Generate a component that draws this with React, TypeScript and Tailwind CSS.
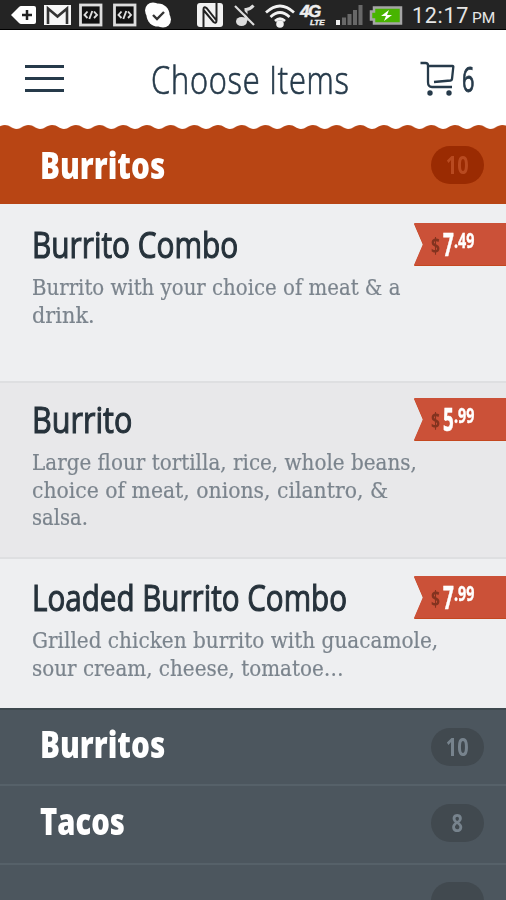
import React from 'react';
import clsx from 'clsx';

interface MenuItem {
  name: string;
  nameClass: string;
  lines: { text: string; className: string }[];
  dollars: string;
  cents: string;
  rowClass: string;
  tagClass: string;
}

const items: MenuItem[] = [
  {
    name: 'Burrito Combo',
    nameClass: 'scale-x-[0.806]',
    lines: [
      { text: 'Burrito with your choice of meat & a', className: 'scale-x-[0.918]' },
      { text: 'drink.', className: 'scale-x-[0.97]' },
    ],
    dollars: '7',
    cents: '.49',
    rowClass: 'h-[177px] bg-[#eeeff1] pt-[19px]',
    tagClass: 'mt-0',
  },
  {
    name: 'Burrito',
    nameClass: 'scale-x-[0.825]',
    lines: [
      { text: 'Large flour tortilla, rice, whole beans,', className: 'scale-x-[0.928]' },
      { text: 'choice of meat, onions, cilantro, &', className: 'scale-x-[0.948]' },
      { text: 'salsa.', className: 'scale-x-[0.91]' },
    ],
    dollars: '5',
    cents: '.99',
    rowClass: 'h-[176px] border-t-2 border-[#dedfe1] bg-[#e8e8ea] pt-[15px]',
    tagClass: 'mt-0',
  },
  {
    name: 'Loaded Burrito Combo',
    nameClass: 'scale-x-[0.8]',
    lines: [
      { text: 'Grilled chicken burrito with guacamole,', className: 'scale-x-[0.932]' },
      { text: 'sour cream, cheese, tomatoe…', className: 'scale-x-[0.927]' },
    ],
    dollars: '7',
    cents: '.99',
    rowClass: 'h-[151px] border-t-2 border-[#dedfe1] bg-[#eeeff1] pt-[17px]',
    tagClass: 'mt-0',
  },
];

const CodeIcon = () => (
  <svg width="24" height="24" viewBox="0 0 24 24" fill="none">
    <rect x="1.5" y="2" width="20.5" height="20" fill="#111" stroke="#ddd" strokeWidth="2.8" />
    <path d="M8.5 8.5 5.5 12l3 3M15 8.5l3 3.500-3 3M13.300 8l-3 8" stroke="#ddd" strokeWidth="1.9" />
  </svg>
);

const StatusBar = () => (
  <div className="flex h-[30px] shrink-0 items-center border-b border-black bg-[#242424] pt-[1px] text-[#eee]">
    <svg className="ml-[10px] shrink-0" width="27" height="20" viewBox="0 0 27 20">
      <path d="M1 10 9 2q1-1 2-1h13q2 0 2 2v14q0 2-2 2H11q-1 0-2-1Z" fill="#fff" />
      <path d="M17 5v10M12 10h10" stroke="#222" strokeWidth="2.5" />
    </svg>
    <svg className="ml-[7px] shrink-0" width="27" height="20" viewBox="0 0 27 20" fill="none">
      <rect width="27" height="20" fill="#f6f6f6" />
      <path d="M4 19V3.5l9.5 8 9.5-8V19" stroke="#333" strokeWidth="2.6" />
    </svg>
    <div className="ml-[8px] shrink-0"><CodeIcon /></div>
    <div className="ml-[10px] shrink-0"><CodeIcon /></div>
    <svg className="ml-[7px] shrink-0" width="28" height="26" viewBox="0 0 28 26">
      <circle cx="9" cy="8.5" r="8" fill="#fff" />
      <circle cx="19" cy="17.5" r="8" fill="#fff" />
      <circle cx="14" cy="13" r="11.5" fill="#fff" />
      <path d="m9 13 4 4 7-7" fill="none" stroke="#333" strokeWidth="2.4" />
    </svg>
    <svg className="ml-[24px] shrink-0" width="28" height="26" viewBox="0 0 28 26">
      <rect x="1" y="1" width="26" height="24" rx="3" fill="#f2f2f2" />
      <path d="M7.5 25V7.5q0-3.500 3-1.500l10 12.500M20.500 1v17.500q0 3.500-3 1.500l-10-12" fill="none" stroke="#222" strokeWidth="2" />
    </svg>
    <svg className="ml-[9px] shrink-0" width="25" height="26" viewBox="0 0 25 26" fill="none">
      <path d="M13 19V7.500q4 0 7.500-4" stroke="#ddd" strokeWidth="3" />
      <ellipse cx="8.5" cy="19.5" rx="5.5" ry="4.5" fill="#ddd" />
      <path d="m3 2 19 19" stroke="#222" strokeWidth="1.8" />
      <path d="m2 4 19 19" stroke="#ddd" strokeWidth="2.2" />
    </svg>
    <svg className="ml-[6px] shrink-0" width="32" height="25" viewBox="0 0 32 25" fill="none">
      <path d="M2 9.5q14-13 28 0M6.5 14q9.500-9 19 0M11 18q5-4.500 10 0" stroke="#f2f2f2" strokeWidth="2.7" />
      <circle cx="16" cy="21" r="3.8" fill="#f2f2f2" />
    </svg>
    <div className="ml-[4px] flex h-[24px] w-[32px] shrink-0 flex-col pt-[1px] font-['Liberation_Sans'] font-bold italic">
      <span className="h-[15px] text-[17px] leading-[15px] tracking-[-1.5px] [-webkit-text-stroke:0.5px]">4G</span>
      <span className="h-[8px] pl-[10px] text-[8px] leading-[8px] [-webkit-text-stroke:0.4px]">LTE</span>
    </div>
    <svg className="ml-[4px] shrink-0" width="28" height="22" viewBox="0 0 28 22" fill="#686868">
      <rect y="16" width="4" height="5" fill="#eee" />
      <rect x="6" y="13.5" width="4" height="7.5" />
      <rect x="11.5" y="10" width="4" height="11" />
      <rect x="17" y="6" width="4" height="15" />
      <rect x="22.5" y="1" width="4" height="20" />
    </svg>
    <svg className="ml-[5px] shrink-0" width="34" height="19" viewBox="0 0 34 19">
      <path d="M5 1.5h27v16H5v-4H2v-8h3Z" fill="#48b400" stroke="#a5a5a5" strokeWidth="2.5" />
      <path d="m20 4-8 6h5l-2 5 8-6h-5Z" fill="#fff" />
    </svg>
    <div className="ml-[9px] flex items-baseline whitespace-nowrap pt-[3px] font-[Roboto] text-[#e6e6e6]">
      <span className="w-[56px] text-[21.5px] leading-[28px] tracking-[0.7px]">12:17</span>
      <span className="ml-[4px] text-[15.5px] leading-[28px]">PM</span>
    </div>
  </div>
);

const Header = () => (
  <header className="flex h-[95px] shrink-0 bg-white text-[#263a4a]">
    <div className="ml-[25px] mt-[35px] flex h-[27px] w-[39px] flex-col justify-between">
      <span className="h-[3px] bg-[#263a4a]" />
      <span className="h-[3px] bg-[#263a4a]" />
      <span className="h-[3px] bg-[#263a4a]" />
    </div>
    <h1 className="ml-[87px] mt-[24px] w-[198px] origin-left scale-x-[0.79] whitespace-nowrap text-[39px] font-light leading-[50px] tracking-[1px] [-webkit-text-stroke:0.7px]">
      Choose Items
    </h1>
    <svg className="ml-[71px] mt-[30px]" width="36" height="38" viewBox="0 0 36 38" fill="none" stroke="#263a4a" strokeWidth="2.3">
      <path d="M.5 3h5q2.500 0 2.500 2.500V22q0 5 4 5h20" />
      <path d="M8 6h24.500q1 0 .8 1L32 19q-.2 1.300-1.500 1.500L14 22" />
      <circle cx="10" cy="33" r="2.7" fill="#263a4a" stroke="none" />
      <circle cx="29" cy="33" r="2.7" fill="#263a4a" stroke="none" />
    </svg>
    <span className="ml-[6px] mt-[25px] w-[14px] origin-left scale-x-[0.62] text-[35px] leading-[48px] [-webkit-text-stroke:0.9px]">6</span>
  </header>
);

const Scallops = () => (
  <svg className="block h-[5px] w-full shrink-0 bg-white" width="506" height="5">
    <defs>
      <pattern id="scallop" x="-7.15" width="23.7" height="5" patternUnits="userSpaceOnUse">
        <path d="M0 4C4.500 4 6.500 0 11.850 0S19.200 4 23.700 4V5H0Z" fill="#b84514" />
      </pattern>
    </defs>
    <rect width="506" height="5" fill="url(#scallop)" />
  </svg>
);

const PriceTag = ({ dollars, cents, className }: { dollars: string; cents: string; className: string }) => (
  <div className={clsx('h-[43px] w-[92px] shrink-0 drop-shadow-[0_1px_0_#c4471f]', className)}>
    <div className="flex h-[42px] bg-[#cb5138] pl-[17px] text-white [clip-path:polygon(0_0,100%_0,100%_100%,0_100%,9px_50%)]">
      <span className="mt-[10px] w-[12px] origin-left scale-x-[0.75] text-[21px] font-bold leading-[24px] text-[#83331f]">$</span>
      <span className="mt-[5px] w-[11px] origin-left scale-x-[0.59] text-[32px] font-bold leading-[32px] [-webkit-text-stroke:0.6px]">{dollars}</span>
      <span className="mt-[6px] origin-left scale-x-[0.68] text-[21px] font-bold leading-[22px] [-webkit-text-stroke:0.4px]">{cents}</span>
    </div>
  </div>
);

const ItemRow: React.FC<{ item: MenuItem }> = ({ item }) => (
  <div className={clsx('flex shrink-0 overflow-hidden pl-[32px]', item.rowClass)}>
    <div className="w-[382px] shrink-0 pt-[1px]">
      <h2 className={clsx('w-max origin-left whitespace-nowrap text-[37px] leading-[40px] text-[#26323b] [-webkit-text-stroke:1.1px]', item.nameClass)}>
        {item.name}
      </h2>
      <div className="mt-[10px] font-['DejaVu_Serif',serif] text-[21.5px] leading-[27.7px] text-[#7b848d] [-webkit-text-stroke:0.2px]">
        {item.lines.map((line) => (
          <p key={line.text} className={clsx('w-max origin-left whitespace-nowrap', line.className)}>{line.text}</p>
        ))}
      </div>
    </div>
    <PriceTag dollars={item.dollars} cents={item.cents} className={item.tagClass} />
  </div>
);

const Category = ({ name, count, className, badgeClass, nameClass }: {
  name: string; count: string; className: string; badgeClass: string; nameClass: string;
}) => (
  <div className={clsx('flex shrink-0 justify-between pl-[40px] pr-[22px]', className)}>
    <h2 className={clsx('mt-[1px] w-max origin-left whitespace-nowrap text-[37px] font-extrabold leading-[50px] text-white', nameClass)}>{name}</h2>
    <div className={clsx('flex h-[38px] w-[53px] items-center justify-center rounded-full text-[25px] font-bold', badgeClass)}>
      <span className="scale-x-[0.8]">{count}</span>
    </div>
  </div>
);

export default function App() {
  return (
    <div className="flex h-[900px] w-[506px] flex-col overflow-hidden bg-[#4c565e] font-['Open_Sans','Noto_Sans',sans-serif]">
      <StatusBar />
      <Header />
      <Scallops />
      <Category
        name="Burritos"
        count="10"
        className="h-[74px] bg-[#b84514] pt-[9px]"
        nameClass="scale-x-[0.802]"
        badgeClass="mt-[7px] bg-[#9a2b02] text-[#b84a20]"
      />
      {items.map((item) => (
        <ItemRow key={item.name} item={item} />
      ))}
      <Category
        name="Burritos"
        count="10"
        className="h-[76px] border-t-2 border-t-[#3e494f] pt-[8px]"
        nameClass="scale-x-[0.802]"
        badgeClass="mt-[10px] bg-[#41494f] text-[#77838d]"
      />
      <Category
        name="Tacos"
        count="8"
        className="h-[79px] border-t-2 border-[#566169] pt-[9px]"
        nameClass="scale-x-[0.79]"
        badgeClass="mt-[9px] bg-[#41494f] text-[#77838d]"
      />
      <Category
        name=""
        count=""
        className="h-[78px] border-t-2 border-[#566169] pt-[8px]"
        nameClass=""
        badgeClass="mt-[9px] bg-[#41494f]"
      />
    </div>
  );
}
